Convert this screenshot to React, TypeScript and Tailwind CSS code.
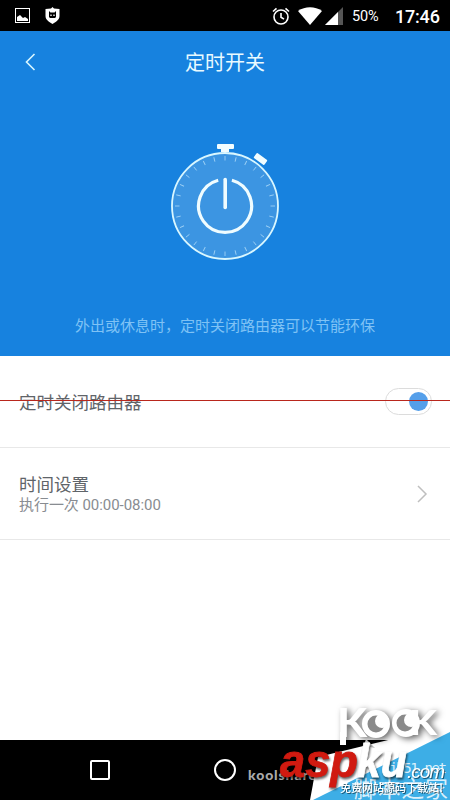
import React, { useState } from "react";

const StatusBar: React.FC = () => (
    <div className="h-[31px] bg-black flex items-center justify-between pl-[15px] pr-[10px] text-white">
        <div className="flex items-center gap-[15px]">
            <svg width="15" height="15" viewBox="0 0 15 15">
                <rect x="0.5" y="0.5" width="14" height="14" fill="none" stroke="white" />
                <path d="M2 13V9l3-2 3 3 2-1 3 2v2z" fill="white" />
            </svg>
            <svg width="15" height="17" viewBox="0 0 15 17">
                <path d="M7.5 0 9 1.5 14.5 2v7c0 4-4 6-7 8-3-2-7-4-7-8V2L6 1.5z" fill="white" />
                <path d="M4 4 5.5 5.5h4L11 4v6l-1 1H5l-1-1z" fill="black" />
                <path d="M5 8.2h2M8 8.2h2" stroke="white" />
            </svg>
        </div>
        <div className="flex items-center font-['Roboto',sans-serif]">
            <svg width="18" height="18" viewBox="0 0 18 18" fill="none" stroke="white" strokeWidth="1.6">
                <circle cx="9" cy="10" r="7" />
                <path d="M9 6v4.3l3 1.8M1 4.5 4.5 1.3M17 4.5 13.5 1.3" />
            </svg>
            <svg className="ml-2" width="24" height="18" viewBox="0 0 24 18">
                <path d="M0 4C7-1 17-1 24 4L12 18z" fill="white" />
            </svg>
            <svg className="ml-[3px]" width="18" height="18" viewBox="0 0 18 18">
                <path d="M18 0v18H0z" fill="#555" />
                <path d="M13 5v13H0z" fill="white" />
            </svg>
            <span className="ml-[9px] w-[28px] text-[14.5px] tracking-[-0.2px] mt-[3px]">50%</span>
            <span className="ml-[15px] w-[45px] text-[18px] font-medium tracking-[-0.2px] mt-[2px]">17:46</span>
        </div>
    </div>
);

const Stopwatch: React.FC = () => {
    const ticks = Array.from({ length: 28 }, (_, i) => (i * 360) / 28);

    return (
        <svg className="mx-auto block" width="112" height="120" viewBox="169 142 112 120">
            <circle cx="225" cy="206" r="53" fill="#3c95e2" stroke="#d9f7ff" strokeWidth="1.8" />
            {ticks.map((deg) => (
                <path key={deg} d="M225 156v4.5" stroke="#9dd0f5" strokeWidth="0.9" transform={`rotate(${deg} 225 206)`} />
            ))}
            <path d="M218 144h15q1 0 1 1v3q0 1-1 1h-4v3h-8v-3h-3q-1 0-1-1v-3q0-1 1-1" fill="#f2fdff" />
            <rect x="254" y="156" width="13" height="6" rx="1" fill="#f2fdff" transform="rotate(36 260.5 159)" />
            <g fill="none" stroke="#effcff" strokeWidth="3.2">
                <path d="M218.2 180.3a26.5 26.5 0 1 0 13.7 0" />
                <path d="M225.2 179.5v28" strokeLinecap="round" strokeWidth="3.6" />
            </g>
        </svg>
    );
};

// Site stamps in the bottom right corner
const Watermark: React.FC = () => (
    <svg className="absolute left-[240px] top-[700px]" width="210" height="100" viewBox="240 700 210 100">
        <text x="248" y="780" className="font-['Lato',sans-serif] font-black" fontSize="14" fill="#aaa" textLength="68">koolshare</text>
        <path d="M450 725 318 757 310 800h140z" fill="white" />
        <path d="M450 732v68H313z" fill="#3daee6" />
        <g className="drop-shadow-[3px_2px_3px_rgba(0,0,0,0.6)] font-['Lato',sans-serif] font-black" fill="white">
            <text x="337" y="737" fontSize="39" textLength="30" lengthAdjust="spacingAndGlyphs">K</text>
            <circle cx="376" cy="724" r="14" />
            <circle cx="406" cy="723" r="14" />
            <text x="409" y="735" fontSize="34" textLength="28" lengthAdjust="spacingAndGlyphs">K</text>
            <path d="M340 732h6v13h-6z" />
        </g>
        <circle cx="376" cy="724" r="8.5" fill="#8a8a8a" />
        <circle cx="382" cy="721" r="7" fill="white" />
        <circle cx="405" cy="723" r="8.5" fill="#8a8a8a" />
        <circle cx="411" cy="720" r="7" fill="white" />
        <path d="m366 739 9 9-5-1-3 6-3-8z" fill="#bbb" />
        <text x="389" y="773" fontSize="14" textLength="58" fill="#d9f0fc" className="font-['DejaVu_Sans_Mono',monospace]">jb51.net</text>
        <text x="354" y="797" fontSize="23" fill="#d9f0fc" textLength="94" className="font-['Noto_Sans_CJK_SC',sans-serif]">脚本之家</text>
        <g className="font-['Liberation_Sans',sans-serif] font-bold italic drop-shadow-[1px_2px_1px_rgba(0,0,0,0.6)]">
            <text x="280" y="777" fontSize="46" fill="#d01a10" textLength="78" lengthAdjust="spacingAndGlyphs" stroke="#d01a10" strokeWidth="0.8">asp</text>
            <text x="357" y="777" fontSize="46" fill="white" textLength="50" lengthAdjust="spacingAndGlyphs" stroke="white" strokeWidth="0.8">ku</text>
        </g>
        <g fill="white" className="drop-shadow-[1px_1px_0px_rgba(0,0,0,0.5)]">
            <text x="407" y="778" fontSize="19" textLength="38" className="font-['Liberation_Sans',sans-serif] italic">.com</text>
            <text x="340" y="792" fontSize="11.5" textLength="103" lengthAdjust="spacingAndGlyphs" className="font-['Noto_Sans_CJK_SC',sans-serif] font-medium">免费网站源码下载站!</text>
        </g>
    </svg>
);

const App: React.FC = () => {
    const [enabled, setEnabled] = useState<boolean>(true);

    return (
        <div className="relative w-[450px] h-[800px] overflow-hidden bg-white flex flex-col font-['Noto_Sans_CJK_SC',sans-serif]">
            <StatusBar />

            {/* Header */}
            <div className="h-[325px] bg-[#1782df] flex flex-col">
                <div className="h-[62px] grid grid-cols-[60px_1fr_60px] items-center">
                    <svg className="ml-[25px]" width="11" height="18" viewBox="0 0 11 18" fill="none" stroke="#d9f7ff" strokeWidth="1.6">
                        <path d="M9.5 1 1.5 9l8 8" />
                    </svg>
                    <h1 className="text-center text-[20px] leading-7 text-[#e9faff]">定时开关</h1>
                </div>
                <div className="mt-[49px]">
                    <Stopwatch />
                </div>
                <p className="mt-[53px] text-center text-[15px] leading-5 text-[#7fc2f5]">外出或休息时，定时关闭路由器可以节能环保</p>
            </div>

            {/* Settings */}
            <div className="h-[92px] pl-[19px] pr-[18px] flex items-center justify-between border-b border-[#e8e8e8]">
                <span className="mt-[2px] text-[17.5px] text-[#5f6469]">定时关闭路由器</span>
                <button
                    onClick={() => setEnabled(!enabled)}
                    className={`w-[47px] h-[27px] rounded-full border border-[#dcdcdc] px-[3px] flex items-center ${enabled ? "justify-end" : "justify-start"}`}
                >
                    <span className="size-[19px] rounded-full bg-[#559fea]" />
                </button>
            </div>
            <div className="h-[92px] pl-[19px] pr-[22px] flex items-center justify-between border-b border-[#e8e8e8]">
                <div>
                    <div className="text-[17.5px] leading-[22px] text-[#5f6469]">时间设置</div>
                    <div className="mt-px text-[15px] leading-[19px] tracking-[-0.05px] text-[#888c91] font-['Roboto','Noto_Sans_CJK_SC',sans-serif]">执行一次 00:00-08:00</div>
                </div>
                <svg width="11" height="18" viewBox="0 0 11 18" fill="none" stroke="#bfbfbf" strokeWidth="1.5">
                    <path d="m1 1 8 8-8 8" />
                </svg>
            </div>

            {/* Navigation bar */}
            <div className="mt-auto h-[60px] bg-black pl-[90px] flex items-center">
                <div className="size-5 border-2 border-white rounded-[2px]" />
                <div className="ml-[104px] size-[22px] border-2 border-white rounded-full" />
            </div>

            <div className="absolute inset-x-0 top-[400px] h-px bg-[#b9271d]" />
            <Watermark />
        </div>
    );
};

export default App;
